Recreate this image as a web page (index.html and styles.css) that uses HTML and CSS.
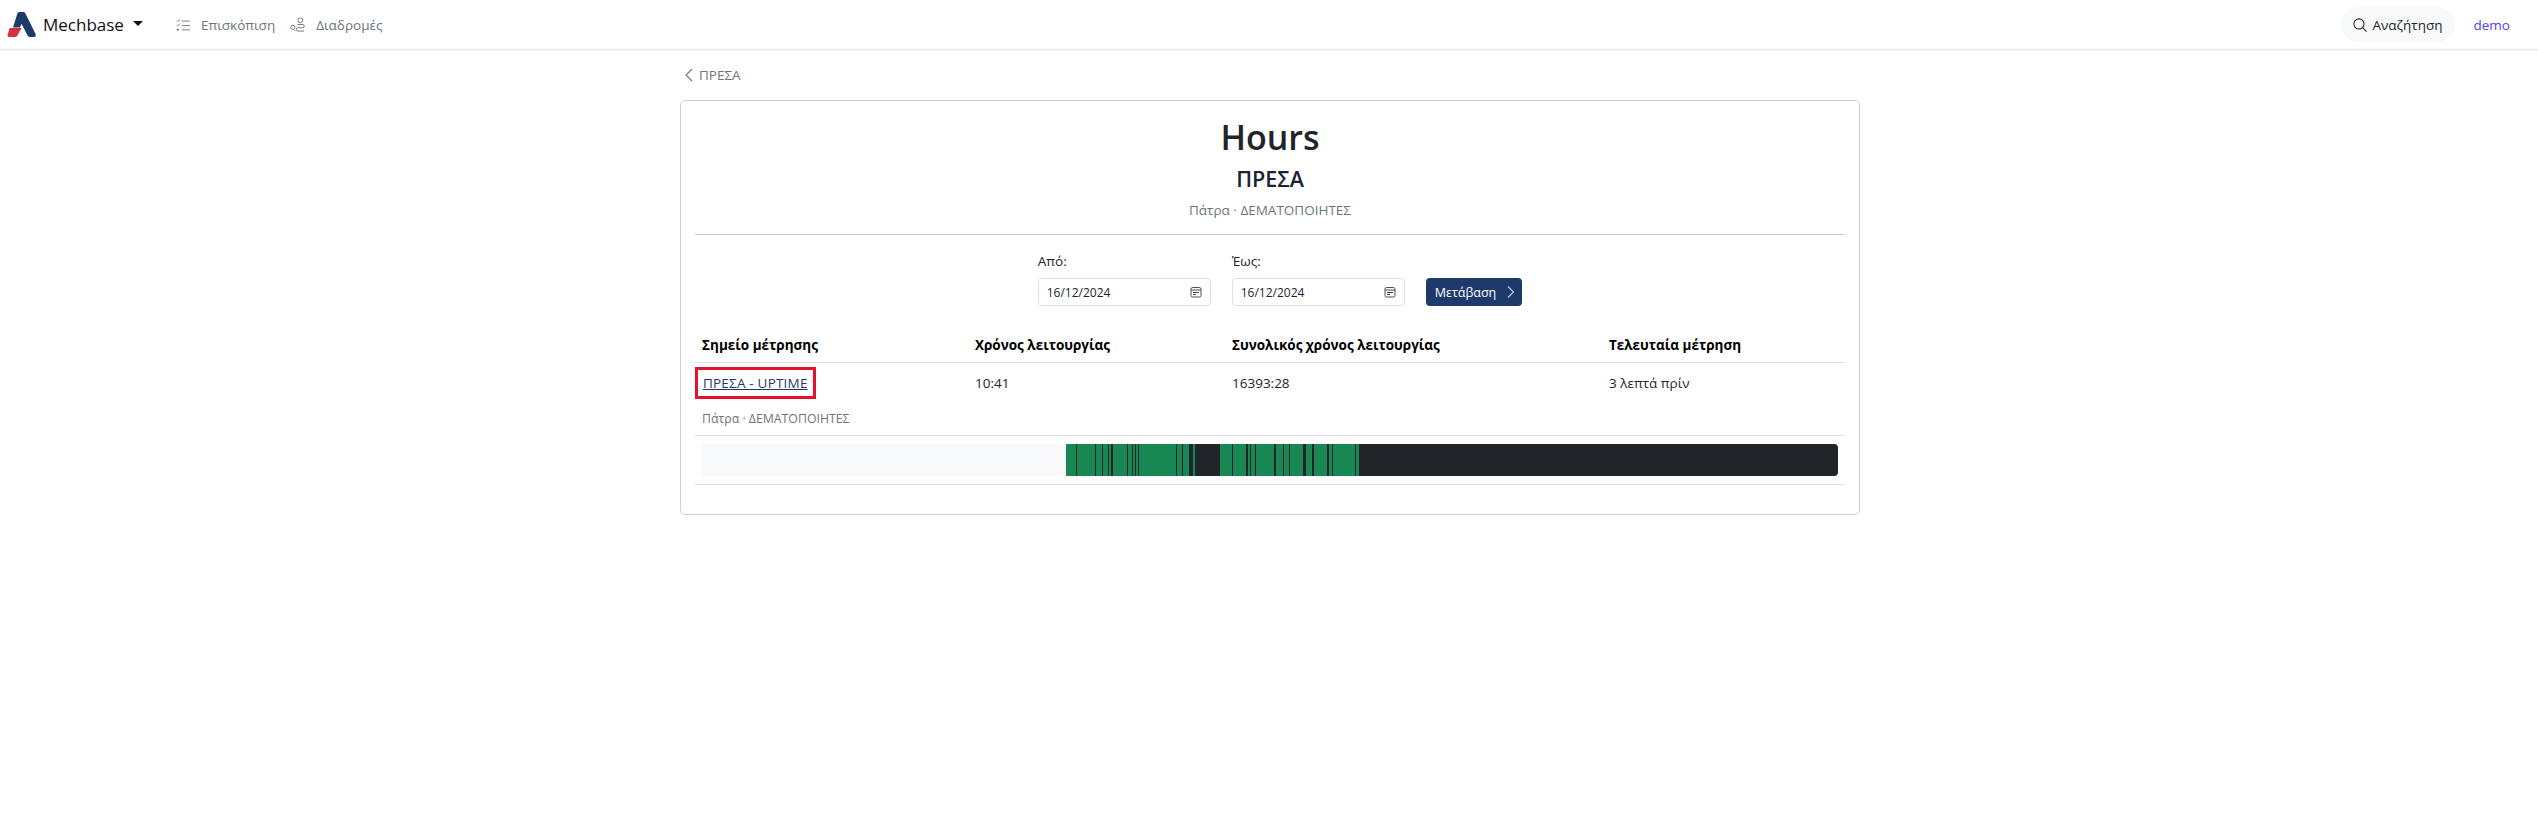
FILE: index.html
```html
<!DOCTYPE html>
<html lang="el">
<head>
    <meta charset="UTF-8">
    <title>Hours - Mechbase</title>
    <link rel="stylesheet" href="styles.css">
</head>
<body>

<!-- Top navigation -->
<nav class="navbar">
    <a class="brand">
        <svg class="logo" width="30" height="28" viewBox="0 0 30 28">
            <path d="M2.6 17h12l-4.2 7.6c-.5.9-1.2 1.4-2.2 1.4H2.2C.8 26 0 25 .7 23.8z" fill="#d7313f"/>
            <path d="M10.4 2.4C11 1.3 11.8 1 12.8 1h3.4c1 0 1.7.4 2.2 1.4l10.2 20.6c.6 1.5-.2 3-1.8 3h-4c-1 0-1.7-.5-2.2-1.4L14.6 13l-1.8 3.6H6z" fill="#1d3a6b"/>
        </svg>
        <span class="brand-name">Mechbase</span>
        <span class="caret"></span>
    </a>
    <a class="nav-link nav-first">
        <svg width="14" height="14" viewBox="0 0 16 16" fill="none" stroke="#6c757d" stroke-width="1">
            <path d="M6.5 3.5H16M6.5 8.5H16M6.5 13.5H16"/>
            <path d="M.8 3l1.2 1.2L4.4 1.4M.8 8l1.2 1.2L4.4 6.4"/>
            <circle cx="2" cy="13.5" r=".8" fill="#6c757d"/>
        </svg>
        Επισκόπιση
    </a>
    <a class="nav-link">
        <svg width="15" height="15" viewBox="0 0 16 16" fill="none" stroke="#6c757d" stroke-width="1">
            <circle cx="11" cy="3.5" r="2.6"/>
            <circle cx="3" cy="11" r="2.2"/>
            <path d="M8 8h5.5a1.7 1.7 0 0 1 0 3.4H8.5a1.8 1.8 0 0 0 0 3.6H15M5 14.5h1"/>
        </svg>
        Διαδρομές
    </a>
    <div class="nav-right">
        <a class="search-pill">
            <svg width="14" height="14" viewBox="0 0 16 16" fill="none" stroke="#212529" stroke-width="1.2">
                <circle cx="6.8" cy="6.8" r="5.8"/>
                <path d="M11 11l4.5 4.5"/>
            </svg>
            Αναζήτηση
        </a>
        <a class="user-link">demo</a>
    </div>
</nav>

<main class="container">
    <a class="back-link">
        <svg width="10" height="14" viewBox="0 0 10 14" fill="none" stroke="#6c757d" stroke-width="1.1">
            <path d="M8 1L2 7l6 6"/>
        </svg>
        ΠΡΕΣΑ
    </a>

    <div class="card">
        <div class="card-head">
            <h1>Hours</h1>
            <h2>ΠΡΕΣΑ</h2>
            <p class="muted">Πάτρα · ΔΕΜΑΤΟΠΟΙΗΤΕΣ</p>
        </div>

        <form class="date-form">
            <div class="field">
                <label>Από:</label>
                <div class="date-input">
                    16/12/2024
                    <svg width="12" height="12" viewBox="0 0 12 12" fill="none" stroke="#495057" stroke-width="1">
                        <rect x="1" y="1.5" width="10" height="9.5" rx="1.5"/>
                        <path d="M1 4h10M3 6.5h6M3 8.5h3"/>
                    </svg>
                </div>
            </div>
            <div class="field">
                <label>Έως:</label>
                <div class="date-input">
                    16/12/2024
                    <svg width="12" height="12" viewBox="0 0 12 12" fill="none" stroke="#495057" stroke-width="1">
                        <rect x="1" y="1.5" width="10" height="9.5" rx="1.5"/>
                        <path d="M1 4h10M3 6.5h6M3 8.5h3"/>
                    </svg>
                </div>
            </div>
            <button type="button" class="btn-go">
                Μετάβαση
                <svg width="9" height="14" viewBox="0 0 9 14" fill="none" stroke="#c5cfe0" stroke-width="1.1">
                    <path d="M2 1.5L7.5 7 2 12.5"/>
                </svg>
            </button>
        </form>

        <table class="hours-table">
            <thead>
                <tr>
                    <th class="col-point">Σημείο μέτρησης</th>
                    <th class="col-time">Χρόνος λειτουργίας</th>
                    <th class="col-total">Συνολικός χρόνος λειτουργίας</th>
                    <th>Τελευταία μέτρηση</th>
                </tr>
            </thead>
            <tbody>
                <tr class="row-main">
                    <td><a class="point-link">ΠΡΕΣΑ - UPTIME</a></td>
                    <td>10:41</td>
                    <td>16393:28</td>
                    <td>3 λεπτά πρίν</td>
                </tr>
                <tr class="row-sub">
                    <td colspan="4">Πάτρα · ΔΕΜΑΤΟΠΟΙΗΤΕΣ</td>
                </tr>
                <tr class="row-bar">
                    <td colspan="4">
                        <div class="timeline" id="timeline"></div>
                    </td>
                </tr>
            </tbody>
        </table>
    </div>
</main>

<script>
    // Widths in px of alternating on / off stretches, starting with on
    const stretches = [10,1,18,1,6,1,5,1,2,2,14,1,4,1,2,1,2,1,37,1,5,1,6,4,2,25,12,1,13,2,2,1,4,1,18,2,7,1,5,1,13,3,6,2,13,2,3,1,22,1,3];
    const timeline = document.getElementById("timeline");

    const blank = document.createElement("span");
    blank.className = "seg-empty";
    timeline.appendChild(blank);

    stretches.forEach((width, i) => {
        const seg = document.createElement("span");
        seg.className = i % 2 === 0 ? "seg-on" : "seg-off";
        seg.style.width = width + "px";
        timeline.appendChild(seg);
    });

    const rest = document.createElement("span");
    rest.className = "seg-rest";
    timeline.appendChild(rest);
</script>
</body>
</html>
```

FILE: styles.css
```css
body {
    font-family: "Open Sans", "Noto Sans", sans-serif;
    font-size: 13.5px;
    color: #212529;
    background-color: #fff;
    margin: 0;
}

/* Navbar */
.navbar {
    display: flex;
    align-items: center;
    height: 49px;
    padding: 0 0 0 7px;
    background-color: #fff;
    border-bottom: 1px solid #e9e9ea;
    box-shadow: 0 1px 2px rgba(0, 0, 0, 0.04);
}
.brand {
    display: flex;
    align-items: center;
}
.logo {
    margin-right: 6px;
}
.brand-name {
    font-size: 17px;
    color: #111;
}
.caret {
    width: 0;
    height: 0;
    margin-left: 9px;
    margin-bottom: 3px;
    border-top: 5px solid #111;
    border-left: 5px solid transparent;
    border-right: 5px solid transparent;
}
.nav-link {
    display: flex;
    align-items: center;
    gap: 11px;
    color: #6c757d;
    margin-left: 15px;
}
.nav-first {
    margin-left: 33px;
}
.nav-right {
    display: flex;
    align-items: center;
    margin-left: auto;
    gap: 19px;
    padding-right: 28px;
}
.search-pill {
    display: flex;
    align-items: center;
    gap: 5px;
    height: 35px;
    padding: 0 12px;
    border-radius: 18px;
    background-color: #f8f9fa;
}
.user-link {
    color: #4f46e5;
}

/* Page */
.container {
    width: 1180px;
    margin: 0 678px 0 680px;
}
.back-link {
    display: flex;
    align-items: center;
    gap: 5px;
    height: 50px;
    padding-left: 4px;
    color: #6c757d;
}
.card {
    border: 1px solid #d0d0d0;
    border-radius: 5px;
    padding: 12px 14px 29px;
}
.card-head {
    text-align: center;
    border-bottom: 1px solid #ccc;
    padding-bottom: 15px;
}
h1 {
    font-size: 34px;
    font-weight: 600;
    line-height: 48px;
    margin: 0;
}
h2 {
    font-size: 21.5px;
    font-weight: 600;
    line-height: 30px;
    margin: 3px 0 0;
    color: #1a2433;
}
.muted {
    color: #6c757d;
    margin: 7px 0 0;
    line-height: 18px;
}

/* Date form */
.date-form {
    display: flex;
    justify-content: center;
    align-items: flex-end;
    gap: 21px;
    margin-top: 17px;
    padding-left: 20px;
}
.field label {
    display: block;
    margin-bottom: 8px;
    line-height: 18px;
}
.date-input {
    display: flex;
    align-items: center;
    justify-content: space-between;
    box-sizing: border-box;
    width: 173px;
    height: 28px;
    padding: 0 8px;
    font-size: 12px;
    border: 1px solid #dee2e6;
    border-radius: 4px;
}
.btn-go {
    display: flex;
    align-items: center;
    gap: 10px;
    height: 28px;
    padding: 0 7px 0 9px;
    font-family: inherit;
    font-size: 12.5px;
    color: #fff;
    background-color: #1d3a6b;
    border: none;
    border-radius: 4px;
}

/* Table */
.hours-table {
    width: 100%;
    border-collapse: collapse;
    margin-top: 30px;
}
.hours-table th {
    text-align: left;
    font-weight: 700;
    color: #000;
    padding: 0 7px 7px;
    line-height: 19px;
    border-bottom: 1px solid #dfe0e8;
}
.col-point { width: 259px; }
.col-time { width: 243px; }
.col-total { width: 363px; }
.hours-table td {
    padding: 0 7px;
}
.row-main td {
    height: 39px;
}
.point-link {
    display: inline-block;
    color: #1d3a6b;
    text-decoration: underline;
    padding: 4px 5px;
    margin-left: -7px;
    border: 3px solid #e8112d;
    letter-spacing: 0.2px;
}
.row-sub td {
    height: 33px;
    font-size: 12.3px;
    color: #6c757d;
    border-bottom: 1px solid #dfdfdf;
}
.hours-table .row-bar td {
    padding: 8px 7px;
    border-bottom: 1px solid #dfdfdf;
}

/* Timeline bar */
.timeline {
    display: flex;
    height: 32px;
    border-radius: 4px;
    overflow: hidden;
}
.seg-empty {
    width: 364px;
    background-color: #f8f9fa;
}
.seg-on {
    background-color: #198754;
}
.seg-off {
    background-color: #212529;
}
.seg-rest {
    flex: 1;
    background-color: #212529;
}
```
